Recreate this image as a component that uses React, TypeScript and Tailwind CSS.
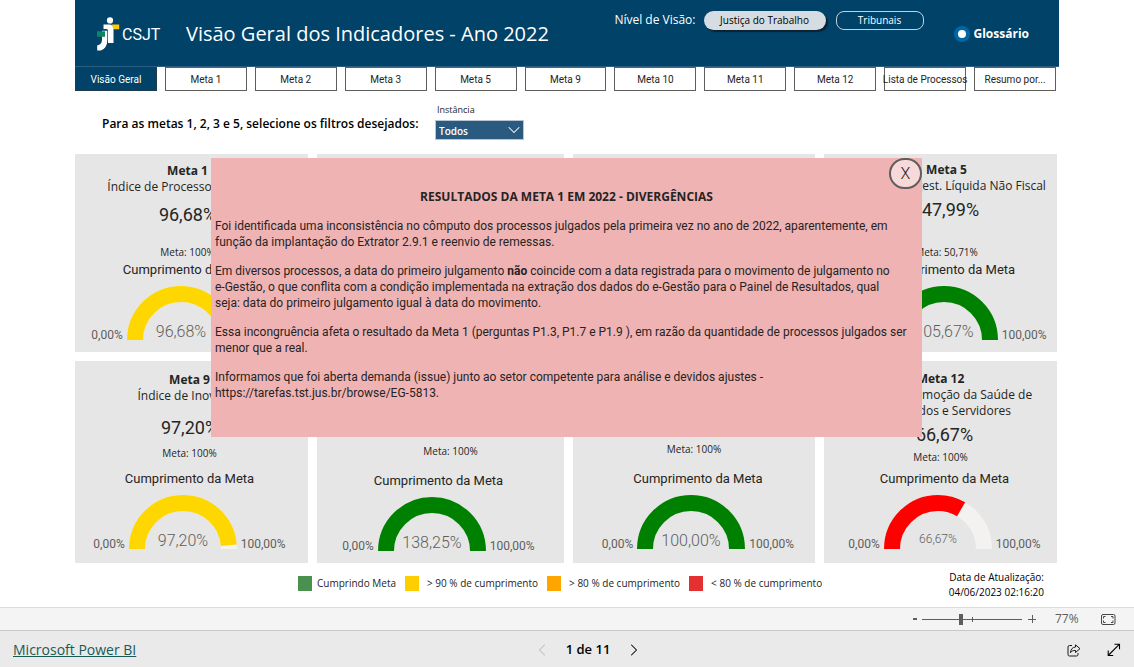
import { useState } from 'react';
import { ChevronDown, ChevronLeft, ChevronRight } from 'lucide-react';

const TABS = [
  'Visão Geral',
  'Meta 1',
  'Meta 2',
  'Meta 3',
  'Meta 5',
  'Meta 9',
  'Meta 10',
  'Meta 11',
  'Meta 12',
  'Lista de Processos',
  'Resumo por...',
];

const LEGEND = [
  { color: 'bg-[#4a9150]', label: 'Cumprindo Meta', gap: 'gap-[5px]' },
  { color: 'bg-[#ffce00]', label: '> 90 % de cumprimento', gap: 'gap-2' },
  { color: 'bg-[#ffa500]', label: '> 80 % de cumprimento', gap: 'gap-2' },
  { color: 'bg-[#e43030]', label: '< 80 % de cumprimento', gap: 'gap-2' },
];

// Half ring: outer radius 54, inner radius 38, drawn as a 16px stroke at radius 46.
function Gauge({ value, label, color, small }: { value: number; label: string; color: string; small?: boolean }) {
  const len = Math.PI * 46;
  const arc = 'M8 54A46 46 0 0 1 100 54';
  return (
    <div className="flex items-end gap-1 text-xs leading-none text-[#605e5c]">
      <span className="-mb-px font-['Roboto']">0,00%</span>
      <svg width="108" height="54" viewBox="0 0 108 54" fill="none" className="shrink-0">
        <path d={arc} stroke="#f3f2f1" strokeWidth="16" />
        <path d={arc} stroke={color} strokeWidth="16" strokeDasharray={`${len * Math.min(value, 1)} ${len * 2}`} />
        <text
          x="54"
          y={small ? 48 : 51}
          textAnchor="middle"
          fill="#605e5c"
          className={small ? "font-['Roboto'] text-xs font-light" : "font-['Roboto'] text-base font-light"}
        >
          {label}
        </text>
      </svg>
      <span className="-mb-px font-['Roboto']">100,00%</span>
    </div>
  );
}

interface CardProps {
  title?: string;
  subtitle?: string[];
  result?: string;
  target: string;
  value: number;
  label: string;
  color: string;
  className?: string;
  resultClass?: string;
  targetClass?: string;
  gaugeClass?: string;
  small?: boolean;
}

function Card({
  title,
  subtitle = [],
  result,
  target,
  value,
  label,
  color,
  className = 'pt-2 pb-3',
  resultClass = '',
  targetClass = '',
  gaugeClass = '',
  small,
}: CardProps) {
  return (
    <article className={`flex flex-col items-center overflow-hidden whitespace-nowrap bg-[#e6e6e6] ${className}`}>
      {title && <h2 className="text-xs font-bold leading-4">{title}</h2>}
      {subtitle.map((s) => (
        <p key={s} className="text-xs leading-4">
          {s}
        </p>
      ))}
      {result && <p className={`font-['Roboto'] text-lg leading-5 ${resultClass}`}>{result}</p>}
      <div className="mt-auto flex flex-col items-center">
        <p className={`text-[10px] leading-3 ${targetClass}`}>Meta: {target}</p>
        <h3 className={`mb-2 font-['Roboto'] text-[13px] leading-4 ${gaugeClass}`}>Cumprimento da Meta</h3>
        <div className={gaugeClass}>
          <Gauge value={value} label={label} color={color} small={small} />
        </div>
      </div>
    </article>
  );
}

function Logo() {
  return (
    <svg width="66" height="36" viewBox="0 0 66 36" className="shrink-0" role="img" aria-label="CSJT">
      <circle cx="14" cy="4.400" r="3.100" fill="#fff" />
      <path d="M7.500 8.500H13q4.500 0 4.500 4.500V27H12V14.500q0-1.500-1.500-1.500h-3z" fill="#fff" />
      <path d="M6 14.800h5.300v9q0 8.500-6.500 10.700H1.200v-5Q6 28.500 6 23.500z" fill="#fff" />
      <path d="M1 15.300h8v5.500H1z" fill="#0b8467" />
      <path d="M15.500 8.500h7.700v4.800h-6q0-2.500-1.700-4.800z" fill="#ffc90e" />
      <text x="26" y="24" fill="#fff" className="font-['Roboto'] text-base">
        CSJT
      </text>
    </svg>
  );
}

function Notice({ onClose }: { onClose: () => void }) {
  return (
    <div
      role="dialog"
      aria-labelledby="notice-title"
      className="absolute left-[136px] right-[135px] top-1 h-[279px] whitespace-nowrap bg-[#f0b3b3] px-1 pt-[31px] text-xs leading-4"
    >
      <button
        type="button"
        onClick={onClose}
        className="absolute right-0 top-0 flex h-[31px] w-[33px] items-center justify-center rounded-full border-2 border-[#605e5c] bg-[#f8d9d9] font-['Roboto'] text-base font-light"
      >
        X
      </button>
      <h2 id="notice-title" className="text-center font-bold">
        RESULTADOS DA META 1 EM 2022 - DIVERGÊNCIAS
      </h2>
      <div className="mt-[13px] flex flex-col gap-[13px] font-['Roboto']">
        <p>
          Foi identificada uma inconsistência no cômputo dos processos julgados pela primeira vez no ano de 2022,
          aparentemente, em
          <br />
          função da implantação do Extrator 2.9.1 e reenvio de remessas.
        </p>
        <p>
          Em diversos processos, a data do primeiro julgamento <b>não</b> coincide com a data registrada para o
          movimento de julgamento no
          <br />
          e-Gestão, o que conflita com a condição implementada na extração dos dados do e-Gestão para o Painel de
          Resultados, qual
          <br />
          seja: data do primeiro julgamento igual à data do movimento.
        </p>
        <p>
          Essa incongruência afeta o resultado da Meta 1 (perguntas P1.3, P1.7 e P1.9 ), em razão da quantidade de
          processos julgados ser
          <br />
          menor que a real.
        </p>
        <p>
          Informamos que foi aberta demanda (issue) junto ao setor competente para análise e devidos ajustes -
          <br />
          https://tarefas.tst.jus.br/browse/EG-5813.
        </p>
      </div>
    </div>
  );
}

export default function App() {
  const [tab, setTab] = useState(TABS[0]);
  const [open, setOpen] = useState(true);
  const [zoom, setZoom] = useState(77);

  return (
    <div className="flex min-h-screen flex-col bg-white font-['Open_Sans','Noto_Sans',sans-serif] text-[#252423]">
      <main className="mx-auto w-full max-w-[984px] flex-1">
        <header className="flex h-[67px] items-start border-b border-[#2b5d82] bg-[#004268] pl-[21px] text-white">
          <div className="pt-4">
            <Logo />
          </div>
          <h1 className="ml-6 pt-5 text-xl leading-7">Visão Geral dos Indicadores - Ano 2022</h1>
          <div className="ml-auto flex items-center pt-[10px]">
            <span className="mr-2 text-xs leading-5">Nível de Visão:</span>
            <button
              type="button"
              className="h-[19px] w-[122px] rounded-full bg-[#d6dde2] text-[10px] text-black shadow-[2px_2px_1px_#0b2234]"
            >
              Justiça do Trabalho
            </button>
            <button type="button" className="ml-[10px] h-[19px] w-[88px] rounded-lg border border-[#c5d2dc] text-[10px]">
              Tribunais
            </button>
          </div>
          <a href="#glossario" className="mx-[30px] flex items-center gap-1 pt-6 text-xs font-bold leading-5">
            <svg width="16" height="16" viewBox="0 0 16 16">
              <circle cx="8" cy="8" r="8" fill="#0067a5" />
              <circle cx="8" cy="8" r="4" fill="#fff" />
            </svg>
            Glossário
          </a>
        </header>

        <nav className="mr-[3px] grid grid-cols-11 gap-2">
          {TABS.map((t) => (
            <button
              key={t}
              type="button"
              onClick={() => setTab(t)}
              className={
                "flex h-6 items-center justify-center whitespace-nowrap border font-['Roboto'] text-[10px] " +
                (t === tab ? 'border-[#1f3b50] bg-[#004268] text-white' : 'border-[#605e5c] bg-white')
              }
            >
              {t}
            </button>
          ))}
        </nav>

        <div className="flex h-[63px] items-start pl-[27px]">
          <p className="w-[333px] whitespace-nowrap pt-[25px] text-xs font-semibold leading-4 text-black">
            Para as metas 1, 2, 3 e 5, selecione os filtros desejados:
          </p>
          <div className="flex flex-col pt-3">
            <label htmlFor="instancia" className="pl-[2px] text-[9px] leading-[14px]">
              Instância
            </label>
            <div className="relative mt-[3px]">
              <select
                id="instancia"
                className="block h-5 w-[89px] appearance-none border border-[#b9c6d2] bg-[#2b5a80] pl-[3px] pt-[2px] text-[10px] font-semibold text-white"
              >
                <option>Todos</option>
              </select>
              <ChevronDown className="pointer-events-none absolute right-0 top-0 size-5 text-white" strokeWidth={1.25} />
            </div>
          </div>
        </div>

        <section className="relative mr-[2px] grid grid-cols-[233fr_247fr_242fr_233fr] grid-rows-[198px_202px] gap-[9px]">
          <Card
            title="Meta 1"
            subtitle={['Índice de Processos Julgados']}
            result="96,68%"
            resultClass="mt-[10px]"
            target="100%"
            targetClass="mb-1"
            value={0.9668}
            label="96,68%"
            color="#ffd700"
            className="pt-[9px] pr-2 pb-3"
          />
          <article className="bg-[#e6e6e6]" />
          <article className="bg-[#e6e6e6]" />
          <Card
            title="Meta 5"
            subtitle={['Taxa de Congest. Líquida Não Fiscal']}
            result="47,99%"
            resultClass="mt-[6px] pl-2"
            target="50,71%"
            targetClass="mb-1"
            gaugeClass="pl-2"
            value={1.0567}
            label="105,67%"
            color="#008000"
            className="pt-2 pb-3 pl-3"
          />
          <Card
            title="Meta 9"
            subtitle={['Índice de Inovação']}
            result="97,20%"
            resultClass="mt-[14px]"
            target="100%"
            targetClass="mb-3"
            value={0.972}
            label="97,20%"
            color="#ffd700"
            className="pt-[11px] pr-1 pb-[14px]"
          />
          <Card
            target="100%"
            targetClass="mb-4 pl-5"
            gaugeClass="pr-1"
            value={1.3825}
            label="138,25%"
            color="#008000"
          />
          <Card
            target="100%"
            targetClass="mb-4"
            gaugeClass="pl-2"
            value={1}
            label="100,00%"
            color="#008000"
            className="pb-[14px]"
          />
          <Card
            title="Meta 12"
            subtitle={['Índice de Promoção da Saúde de', 'Magistrados e Servidores']}
            result="66,67%"
            resultClass="mt-[6px] pl-2"
            target="100%"
            targetClass="mb-2"
            gaugeClass="pl-2"
            value={0.6667}
            label="66,67%"
            color="#ff0000"
            className="pt-[10px] pb-[14px]"
            small
          />
          {open && <Notice onClose={() => setOpen(false)} />}
        </section>

        <div className="flex items-start justify-between pl-[223px] pr-[15px] pt-[7px] text-[10px]">
          <ul className="flex gap-[9px] whitespace-nowrap pt-[6px]">
            {LEGEND.map((l) => (
              <li key={l.label} className={`flex items-center ${l.gap}`}>
                <span className={`h-[15px] w-[14px] ${l.color}`} />
                {l.label}
              </li>
            ))}
          </ul>
          <p className="text-right leading-[15px] text-black">
            Data de Atualização:
            <br />
            04/06/2023 02:16:20
          </p>
        </div>
      </main>

      <div className="flex h-[23px] items-center justify-end border-t border-[#dcdcdc] bg-[#f4f4f4] pr-[18px] text-[#605e5c]">
        <button type="button" aria-label="-" onClick={() => setZoom(zoom - 5)} className="flex size-3 items-center justify-center">
          <span className="h-[2px] w-1 bg-[#605e5c]" />
        </button>
        <div className="relative ml-[1px] flex items-center">
          <input
            type="range"
            aria-label="Zoom"
            min={0}
            max={200}
            value={zoom}
            onChange={(e) => setZoom(Number(e.target.value))}
            className="h-[11px] w-[100px] appearance-none bg-transparent [&::-webkit-slider-runnable-track]:h-px [&::-webkit-slider-runnable-track]:bg-[#605e5c] [&::-webkit-slider-thumb]:-mt-[5px] [&::-webkit-slider-thumb]:h-[11px] [&::-webkit-slider-thumb]:w-1 [&::-webkit-slider-thumb]:appearance-none [&::-webkit-slider-thumb]:bg-[#605e5c]"
          />
          <span className="absolute left-1/2 h-[5px] w-px bg-[#605e5c]" />
        </div>
        <button type="button" aria-label="+" onClick={() => setZoom(zoom + 5)} className="ml-[6px]">
          <svg width="8" height="8" viewBox="0 0 8 8" stroke="#605e5c" fill="none">
            <path d="M0 4.500h8M4.500 0v8" />
          </svg>
        </button>
        <span className="ml-[19px] w-[26px] text-xs">{zoom}%</span>
        <button type="button" aria-label="Ajustar à página" className="ml-5">
          <svg width="15" height="11" viewBox="0 0 15 11" stroke="#484644" fill="none">
            <rect x="0.500" y="0.500" width="13.500" height="10" rx="1.500" />
            <path d="M2.500 4.500v-2h2M10 2.500h2v2M12 6.500v2h-2M4.500 8.500h-2v-2" />
          </svg>
        </button>
      </div>

      <footer className="grid h-[37px] grid-cols-3 items-center border-t border-[#c8c8c8] bg-[#eaeaea] pl-[13px] pr-[13px] pt-[2px]">
        <a href="#powerbi" className="justify-self-start text-sm text-[#195a54] underline">
          Microsoft Power BI
        </a>
        <div className="flex items-center justify-center gap-[14px] whitespace-nowrap pl-[42px] text-[13px] font-semibold text-black">
          <button type="button" aria-label="Anterior" disabled className="text-[#bdbdbd]">
            <ChevronLeft className="size-5" strokeWidth={1.25} />
          </button>
          1 de 11
          <button type="button" aria-label="Próxima">
            <ChevronRight className="size-5" strokeWidth={1.25} />
          </button>
        </div>
        <div className="flex items-center gap-[26px] justify-self-end">
          <button type="button" aria-label="Compartilhar">
            <svg width="14" height="13" viewBox="0 0 14 13" stroke="#1b1a19" fill="none" strokeLinejoin="round">
              <path d="M5 1.500H2.500a1.500 1.500 0 0 0-1.500 1.500v7.500A1.500 1.500 0 0 0 2.500 12h7a1.500 1.500 0 0 0 1.500-1.500V9" />
              <path d="M8.500 0.800 13 4.700 8.500 8.500V6.500C6 6.300 4.500 7 3.500 8.700 3.700 5.500 5.300 3.200 8.500 3z" />
            </svg>
          </button>
          <button type="button" aria-label="Tela inteira">
            <svg width="14" height="14" viewBox="0 0 14 14" stroke="#000" fill="none" strokeWidth="1.100">
              <path d="M7.500 1.200h5v5M12.500 1.200 1.200 12.500M1.200 7.500v5h5" />
            </svg>
          </button>
        </div>
      </footer>
    </div>
  );
}
